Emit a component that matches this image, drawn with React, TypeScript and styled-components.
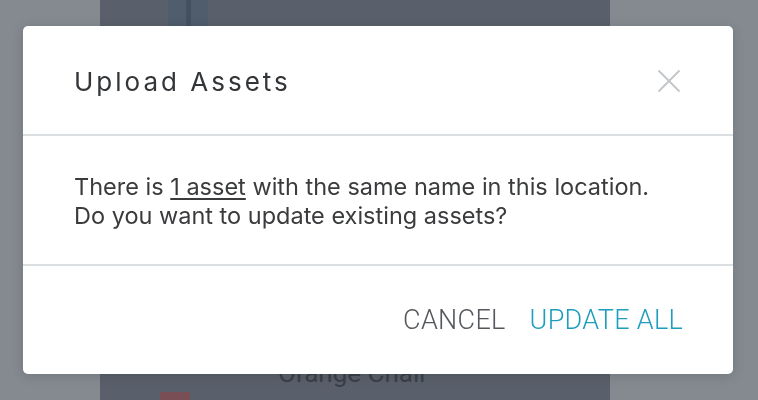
import React from 'react'
import styled, { createGlobalStyle } from 'styled-components'

const GlobalStyle = createGlobalStyle`
  html, body {
    margin: 0;
    padding: 0;
    height: 100%;
  }
  body {
    background: #858a91;
    font-family: Inter, "Noto Sans", sans-serif;
    overflow: hidden;
  }
  #root {
    height: 100%;
  }
`

const Page = styled.div`
  height: 400px;
  display: flex;
  padding-left: 100px;
`

const Column = styled.div`
  width: 510px;
  height: 100%;
  background: #5a606b;
  display: flex;
  flex-direction: column;
  justify-content: space-between;
`

const Strip = styled.div`
  margin-left: 68px;
  width: 40px;
  height: 60px;
  background: linear-gradient(90deg, #4f5d6c 0 45%, #44505d 45% 58%, #4f5d6c 58%);
`

const ItemRow = styled.div`
  display: flex;
  align-items: flex-end;
  height: 40px;
  gap: 88px;
  padding-left: 60px;
`

const Swatch = styled.div`
  width: 30px;
  height: 8px;
  background: #7a4e55;
`

const ItemName = styled.div`
  font-family: Roboto, sans-serif;
  font-size: 26px;
  color: #3b4048;
  align-self: flex-start;
  margin-top: -2px;
`

const Overlay = styled.div`
  position: fixed;
  inset: 0;
  display: flex;
  align-items: flex-start;
  justify-content: center;
  padding-top: 26px;
`

const Dialog = styled.div`
  width: 710px;
  margin-left: -2px;
  background: #fff;
  border-radius: 5px;
  box-shadow: 0 2px 12px rgba(0, 0, 0, 0.15);
  display: flex;
  flex-direction: column;
`

const Header = styled.div`
  height: 110px;
  display: flex;
  align-items: center;
  justify-content: space-between;
  padding: 2px 52px 0 51px;
  border-bottom: 2px solid #dcdfe1;
  box-sizing: border-box;
`

const Title = styled.h2`
  margin: 0;
  font-family: Inter, sans-serif;
  font-weight: 400;
  font-size: 26px;
  letter-spacing: 3px;
  color: #333639;
`

const CloseButton = styled.button`
  border: 0;
  background: none;
  padding: 0;
  width: 24px;
  height: 24px;
  display: flex;
  cursor: pointer;
`

const Body = styled.div`
  height: 130px;
  box-sizing: border-box;
  display: flex;
  align-items: center;
  padding: 2px 51px 0;
  border-bottom: 2px solid #dcdfe1;
`

const Message = styled.p`
  margin: 0;
  font-family: Inter, sans-serif;
  font-size: 23.5px;
  line-height: 29px;
  color: #3a3b3d;
`

const AssetLink = styled.span`
  text-decoration: underline;
  text-underline-offset: 3px;
  text-decoration-thickness: 2px;
`

const Footer = styled.div`
  height: 108px;
  display: flex;
  align-items: center;
  justify-content: flex-end;
  gap: 24px;
  padding: 0 50px 0 51px;
`

const ActionButton = styled.button<{ $primary?: boolean }>`
  border: 0;
  background: none;
  padding: 0;
  font-family: Roboto, sans-serif;
  font-weight: 300;
  font-size: 27px;
  letter-spacing: 0.3px;
  color: ${p => (p.$primary ? '#1f9dbd' : '#54585c')};
  cursor: pointer;
`

function CloseIcon() {
  return (
    <svg width="24" height="24" viewBox="0 0 24 24">
      <path d="M1.5 1.5 L22.5 22.5 M22.5 1.5 L1.5 22.5" stroke="#c3c6c9" strokeWidth="1.8" fill="none" />
    </svg>
  )
}

export default function App() {
  return (
    <>
      <GlobalStyle />
      <Page>
        <Column>
          <Strip />
          <ItemRow>
            <Swatch />
            <ItemName>Orange Chair</ItemName>
          </ItemRow>
        </Column>
      </Page>
      <Overlay>
        <Dialog>
          <Header>
            <Title>Upload Assets</Title>
            <CloseButton aria-label="Close">
              <CloseIcon />
            </CloseButton>
          </Header>
          <Body>
            <Message>
              There is <AssetLink>1 asset</AssetLink> with the same name in this location.
              <br />
              Do you want to update existing assets?
            </Message>
          </Body>
          <Footer>
            <ActionButton>CANCEL</ActionButton>
            <ActionButton $primary>UPDATE ALL</ActionButton>
          </Footer>
        </Dialog>
      </Overlay>
    </>
  )
}
